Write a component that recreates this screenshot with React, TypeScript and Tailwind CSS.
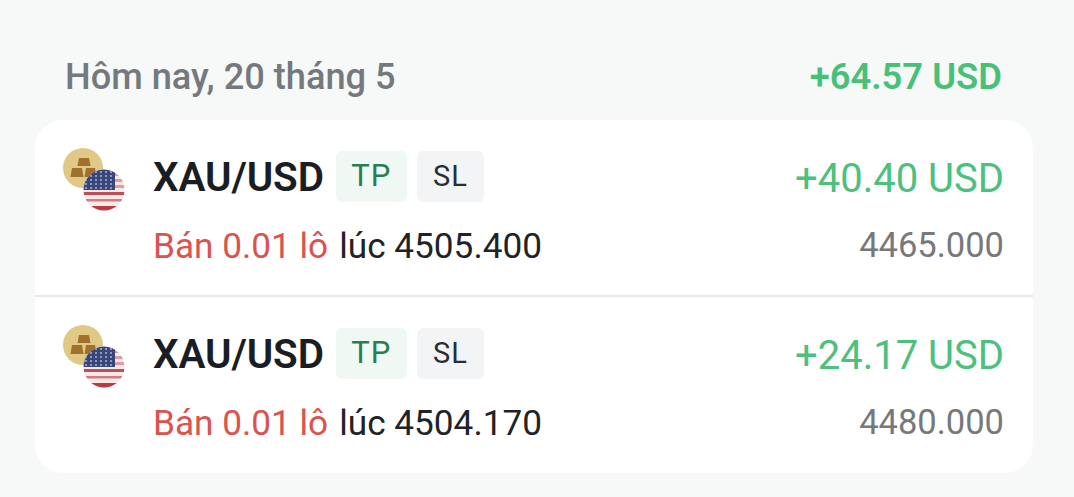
import React from "react";

function Pair({ id }: { id: string }) {
  return (
    <svg width="64" height="66" viewBox="0 0 64 66" className="shrink-0">
      <defs>
        <clipPath id={id}><circle cx="42" cy="42" r="20.5" /></clipPath>
      </defs>
      <circle cx="21" cy="20" r="20" fill="#dfc985" />
      <path d="M17 10h10l1.5 8h-13z" fill="#a0702c" />
      <path d="M10 20h10l1.5 9h-13zM24 20h9l1.5 9h-12z" fill="#a0702c" />
      <g clipPath={`url(#${id})`}>
        <rect x="21" y="21" width="42" height="42" fill="#f7e8e8" />
        <rect x="21" y="25" width="42" height="3" fill="#dc9ea2" />
        <rect x="21" y="31" width="42" height="3" fill="#dc9ea2" />
        <rect x="21" y="37" width="42" height="3" fill="#dc9ea2" />
        <rect x="21" y="44" width="42" height="3" fill="#bc5058" />
        <rect x="21" y="51" width="42" height="2.5" fill="#cf7d83" />
        <rect x="21" y="58" width="42" height="5" fill="#b83a44" />
        <rect x="21" y="21" width="32" height="21" fill="#38467a" />
        <g fill="#a9b4da">
          {[24, 28, 32, 36, 40].map((y) =>
            [24, 29, 34, 39, 44, 49].map((x) => <circle key={`${x}-${y}`} cx={x} cy={y} r="1" />)
          )}
        </g>
      </g>
    </svg>
  );
}

function Row({ id, pnl, open, close }: { id: string; pnl: string; open: string; close: string }) {
  return (
    <div className="flex pl-[27px] pr-[29px] h-[175px] pt-[28px]">
      <Pair id={id} />
      <div className="flex-1 ml-[27px] mt-[3px]">
        <div className="flex items-center h-[51px]">
          <span className="pt-[4px] text-[40.4px] font-semibold text-[#1a1d21] tracking-[-0.1px]">XAU/USD</span>
          <span className="ml-[12px] w-[71px] h-[51px] flex items-center justify-center rounded-[6px] bg-[#eff8f3] text-[#2a7d4f] text-[31px] tracking-[1px]">TP</span>
          <span className="ml-[10px] w-[67px] h-[51px] flex items-center justify-center rounded-[6px] bg-[#f3f4f6] text-[#2a2e33] text-[29px] tracking-[1px]">SL</span>
          <span className="ml-auto pt-[4px] text-[40px] text-[#4cc07c]">{pnl}</span>
        </div>
        <div className="flex items-center mt-[22px] h-[44px] text-[35.2px]">
          <span className="text-[#d9534f]">Bán 0.01 lô</span>
          <span className="ml-[11px] text-[#1f2327]">lúc {open}</span>
          <span className="ml-auto text-[#77787c] text-[34.5px]">{close}</span>
        </div>
      </div>
    </div>
  );
}

export default function App() {
  return (
    <div className="w-[1074px] h-[497px] bg-[#f7f8f8] overflow-hidden font-['Roboto',sans-serif]">
      <div className="flex items-center justify-between h-[120px] pl-[65px] pr-[72px] pt-[34px]">
        <span className="text-[36.2px] font-medium text-[#74797e]">Hôm nay, 20 tháng 5</span>
        <span className="text-[36.4px] font-semibold text-[#49c078]">+64.57 USD</span>
      </div>
      <div className="ml-[35px] w-[998px] h-[353px] bg-white rounded-[28px]">
        <Row id="a" pnl="+40.40 USD" open="4505.400" close="4465.000" />
        <div className="h-[2px] bg-[#e7e8ea]" />
        <Row id="b" pnl="+24.17 USD" open="4504.170" close="4480.000" />
      </div>
    </div>
  );
}
